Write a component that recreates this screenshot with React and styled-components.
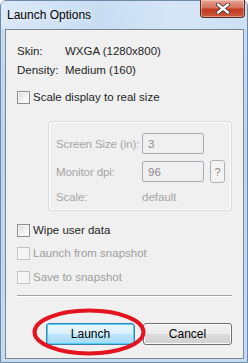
import React from "react";
import styled, { createGlobalStyle } from "styled-components";

const GlobalStyle = createGlobalStyle`
  html, body { margin: 0; padding: 0; }
  body {
    width: 248px;
    height: 363px;
    overflow: hidden;
    font-family: "Liberation Sans", Arial, sans-serif;
    font-size: 11.5px;
    color: #1e1e1e;
  }
`;

const Frame = styled.div`
  width: 248px;
  height: 363px;
  box-sizing: border-box;
  display: flex;
  flex-direction: column;
  background: linear-gradient(180deg, #c9def4 0%, #bcd5f0 40%, #c6dcf3 100%);
  border: 1px solid #6f8aa9;
  border-radius: 6px 6px 0 0;
`;

const TitleBar = styled.div`
  height: 28px;
  display: flex;
  align-items: flex-start;
  justify-content: space-between;
  padding-left: 6px;
  background: linear-gradient(90deg, rgba(255,255,255,0.35) 0%, rgba(255,255,255,0) 40%, rgba(255,255,255,0.25) 70%, rgba(255,255,255,0.1) 100%);
`;

const Title = styled.div`
  margin-top: 7px;
  font-size: 12px;
  color: #000;
  text-shadow: 0 0 6px rgba(255, 255, 255, 0.9);
`;

const CloseButton = styled.div`
  width: 45px;
  height: 18px;
  margin-right: 2px;
  margin-top: -1px;
  box-sizing: border-box;
  border: 1px solid #5a2b25;
  border-top: none;
  border-radius: 0 0 4px 4px;
  background: linear-gradient(180deg, #e8a394 0%, #d6715c 45%, #c0391f 55%, #cf5a3c 100%);
  box-shadow: inset 0 0 0 1px rgba(255, 255, 255, 0.35);
  display: flex;
  align-items: center;
  justify-content: center;
`;

const Client = styled.div`
  flex: 1;
  margin: 0 3px 3px 4px;
  border: 1px solid #7d8791;
  background: #f0f0f0;
  display: flex;
  flex-direction: column;
  padding-left: 11px;
  padding-right: 11px;
`;

const InfoRow = styled.div`
  height: 16px;
  display: flex;
  align-items: center;
  margin-top: ${(p) => p.$top}px;
`;

const InfoLabel = styled.span`
  width: 48px;
`;

const CheckRow = styled.label`
  height: 16px;
  display: flex;
  align-items: center;
  gap: 3px;
  margin-top: ${(p) => p.$top}px;
  color: ${(p) => (p.$disabled ? "#9d9d9d" : "#1e1e1e")};
`;

const Box = styled.span`
  width: 13px;
  height: 13px;
  box-sizing: border-box;
  border: 1px solid ${(p) => (p.$disabled ? "#c4c4c4" : "#8e8f8f")};
  background: ${(p) =>
    p.$disabled
      ? "#f4f4f4"
      : "linear-gradient(135deg, #dcdcdc 0%, #f4f4f4 60%, #ffffff 100%)"};
  box-shadow: inset 0 0 0 1px ${(p) => (p.$disabled ? "#f7f7f7" : "#f4f4f4")};
`;

const Group = styled.div`
  margin: 16px 0 0 31px;
  height: 90px;
  box-sizing: border-box;
  border: 1px solid #dcdcdc;
  border-radius: 3px;
  box-shadow: inset 0 0 0 1px #ffffff;
  padding: 11px 0 0 7px;
  display: flex;
  flex-direction: column;
  color: #a5a5a5;
`;

const FieldRow = styled.div`
  display: flex;
  align-items: center;
  height: ${(p) => (p.$plain ? 16 : 21)}px;
  margin-top: ${(p) => p.$top}px;
`;

const FieldLabel = styled.span`
  width: 86px;
  flex-shrink: 0;
  white-space: nowrap;
  letter-spacing: -0.1px;
`;

const FieldInput = styled.div`
  width: 62px;
  height: 21px;
  box-sizing: border-box;
  border: 1px solid #abadb3;
  border-radius: 2px;
  background: #f0f0f0;
  padding-left: 5px;
  display: flex;
  align-items: center;
  color: #8a8a8a;
`;

const HelpButton = styled.div`
  width: 15px;
  height: 23px;
  margin-left: 6px;
  box-sizing: border-box;
  border: 1px solid #adb2b5;
  border-radius: 3px;
  background: #f4f4f4;
  display: flex;
  align-items: center;
  justify-content: center;
  color: #8a8a8a;
  font-size: 11px;
`;

const Separator = styled.div`
  margin-top: 10px;
  height: 1px;
  background: #a0a0a0;
  border-bottom: 1px solid #ffffff;
`;

const ButtonRow = styled.div`
  margin-top: 26px;
  display: flex;
  justify-content: flex-end;
  gap: 8px;
`;

const Button = styled.div`
  width: 89px;
  height: 22px;
  box-sizing: border-box;
  border-radius: 3px;
  display: flex;
  align-items: center;
  justify-content: center;
  color: #000;
  font-size: 12px;
  border: 1px solid ${(p) => (p.$primary ? "#3c7fb1" : "#707070")};
  background: ${(p) =>
    p.$primary
      ? "linear-gradient(180deg, #eaf6fd 0%, #d9f0fc 50%, #bee6fd 51%, #a7d9f5 100%)"
      : "linear-gradient(180deg, #f2f2f2 0%, #ebebeb 50%, #dddddd 51%, #cfcfcf 100%)"};
  box-shadow: inset 0 0 0 1px ${(p) => (p.$primary ? "#48d3fa" : "#fbfbfb")};
`;

const LaunchWrap = styled.div`
  position: relative;
`;

const Ring = styled.svg`
  position: absolute;
  left: -14px;
  top: -15px;
  width: 114px;
  height: 48px;
  pointer-events: none;
`;

function Check({ label, top, disabled }) {
  return (
    <CheckRow $top={top} $disabled={disabled}>
      <Box $disabled={disabled} />
      {label}
    </CheckRow>
  );
}

export default function App() {
  return (
    <>
      <GlobalStyle />
      <Frame>
        <TitleBar>
          <Title>Launch Options</Title>
          <CloseButton>
            <svg width="14" height="11" viewBox="0 0 14 11">
              <path
                d="M2 1.5 L12 9.5 M12 1.5 L2 9.5"
                stroke="#3b2a2a"
                strokeWidth="4"
                strokeLinecap="round"
              />
              <path
                d="M2 1.5 L12 9.5 M12 1.5 L2 9.5"
                stroke="#ffffff"
                strokeWidth="2.4"
                strokeLinecap="round"
              />
            </svg>
          </CloseButton>
        </TitleBar>
        <Client>
          <InfoRow $top={13}>
            <InfoLabel>Skin:</InfoLabel>
            WXGA (1280x800)
          </InfoRow>
          <InfoRow $top={3}>
            <InfoLabel>Density:</InfoLabel>
            Medium (160)
          </InfoRow>
          <Check top={11} label="Scale display to real size" />
          <Group>
            <FieldRow $top={0}>
              <FieldLabel>Screen Size (in):</FieldLabel>
              <FieldInput>3</FieldInput>
            </FieldRow>
            <FieldRow $top={7}>
              <FieldLabel>Monitor dpi:</FieldLabel>
              <FieldInput>96</FieldInput>
              <HelpButton>?</HelpButton>
            </FieldRow>
            <FieldRow $plain $top={7}>
              <FieldLabel>Scale:</FieldLabel>
              default
            </FieldRow>
          </Group>
          <Check top={11} label="Wipe user data" />
          <Check top={7} disabled label="Launch from snapshot" />
          <Check top={8} disabled label="Save to snapshot" />
          <Separator />
          <ButtonRow>
            <LaunchWrap>
              <Button $primary>Launch</Button>
              <Ring viewBox="0 0 114 48">
                <ellipse
                  cx="57"
                  cy="24"
                  rx="54.5"
                  ry="21.5"
                  fill="none"
                  stroke="#e3141f"
                  strokeWidth="4"
                />
              </Ring>
            </LaunchWrap>
            <Button>Cancel</Button>
          </ButtonRow>
        </Client>
      </Frame>
    </>
  );
}
